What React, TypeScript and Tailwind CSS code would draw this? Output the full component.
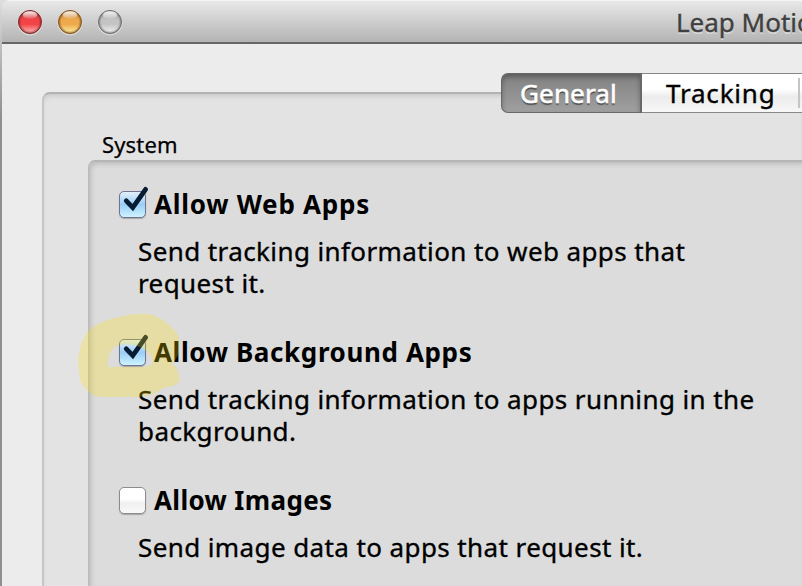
import React from "react";

type Light = { id: string; top: string; mid: string; low: string; rim: string };

const LIGHTS: Light[] = [
  { id: "close", top: "#b8484a", mid: "#f24447", low: "#ffc4c0", rim: "#842a2c" },
  { id: "minimise", top: "#bd8340", mid: "#eda94c", low: "#fff5a8", rim: "#865620" },
  { id: "zoom", top: "#a0a0a0", mid: "#c4c4c4", low: "#f6f6f6", rim: "#707070" },
];

function TrafficLight({ id, top, mid, low, rim }: Light) {
  return (
    <svg width="26" height="27" viewBox="0 0 26 27">
      <defs>
        <linearGradient id={`${id}-body`} x1="0" y1="0" x2="0" y2="1">
          <stop offset="0" stopColor={top} />
          <stop offset="0.4" stopColor={mid} />
          <stop offset="0.6" stopColor={mid} />
          <stop offset="1" stopColor={low} />
        </linearGradient>
        <radialGradient id={`${id}-edge`}>
          <stop offset="0.75" stopColor={rim} stopOpacity="0" />
          <stop offset="1" stopColor={rim} stopOpacity="0.75" />
        </radialGradient>
        <linearGradient id={`${id}-shine`} x1="0" y1="0" x2="0" y2="1">
          <stop offset="0" stopColor="#fff" stopOpacity="0.95" />
          <stop offset="1" stopColor="#fff" stopOpacity="0.1" />
        </linearGradient>
      </defs>
      <circle cx="13" cy="14" r="12" fill="none" stroke="#fff" strokeOpacity="0.5" />
      <circle cx="13" cy="13" r="11.5" fill={`url(#${id}-body)`} />
      <circle cx="13" cy="13" r="11.5" fill={`url(#${id}-edge)`} stroke={rim} />
      <ellipse cx="13" cy="6" rx="7.2" ry="3.8" fill={`url(#${id}-shine)`} />
    </svg>
  );
}

function Checkbox({ checked }: { checked: boolean }) {
  return (
    <span
      className={`relative block h-[27px] w-[27px] rounded-[5px] border shadow-[0_1px_1px_rgba(0,0,0,0.25)] ${
        checked
          ? "border-[#70748c] bg-linear-to-b from-[#e3f0fc] via-[#9bcdf7] to-[#cdf3ff]"
          : "border-[#8c8c8c] bg-linear-to-b from-white from-45% via-[#f0f0f0] via-60% to-[#f8f8f8]"
      }`}
    >
      {checked && (
        <svg className="absolute -top-[6px] -left-px" width="32" height="30" viewBox="0 0 32 30">
          <path
            d="M7.3 14.8L13.8 21.6L26.6 3.4"
            fill="none"
            stroke="#071c32"
            strokeWidth="4.8"
            strokeLinecap="round"
            strokeLinejoin="miter"
          />
        </svg>
      )}
    </span>
  );
}

function Setting({
  title,
  tracking,
  lines,
  checked,
  children,
}: {
  title: string;
  tracking: string;
  lines: string[];
  checked: boolean;
  children?: React.ReactNode;
}) {
  return (
    <section className="relative">
      <div className="flex h-8 items-center pl-px">
        <Checkbox checked={checked} />
        <h2 className={`ml-2 text-[26px] leading-8 font-bold ${tracking}`}>{title}</h2>
      </div>
      <p className="mt-[15px] ml-5 text-[26px] leading-8 tracking-[0.4px] [-webkit-text-stroke:0.35px_black]">
        {lines.map((text) => (
          <span key={text} className="block w-max">
            {text}
          </span>
        ))}
      </p>
      {children}
    </section>
  );
}

function Highlight() {
  return (
    <svg
      className="pointer-events-none absolute -top-[22px] -left-10"
      width="104"
      height="86"
      viewBox="0 0 104 86"
    >
      <path
        d="M10 17C20 8 33 4 47 2C55-1 64 0 72 0C80 3 88 7 94 14C100 18 103 26 101 34C101 40 99 45 94 50C99 53 102 59 101 67C98 73 90 72 84 75C78 80 67 83 58 83L22 83C13 82 6 75 2 66L0 48C1 35 4 25 10 17ZM30 53L67 53C71 52 75 51 75 47C73 41 69 37 64 34C58 30 48 30 40 31C33 34 29 42 30 53Z"
        fill="#ffdf00"
        fillOpacity="0.26"
        fillRule="evenodd"
      />
    </svg>
  );
}

export default function App() {
  return (
    <div className="flex h-[586px] w-[802px] overflow-hidden bg-linear-to-b from-[#dedede] to-[#909090] to-20% font-['Noto_Sans','Open_Sans',sans-serif] text-black">
      <main className="ml-0.5 flex w-[800px] shrink-0 flex-col overflow-hidden rounded-tl-[8px] bg-[#ececec]">
        <header className="flex h-11 shrink-0 items-start border-t border-b-2 border-t-[#f4f4f4] border-b-[#666] bg-linear-to-b from-[#e8e8e8] to-[#b4b4b4]">
          <div className="mt-2 ml-[15px] flex gap-[14px]">
            {LIGHTS.map((l) => (
              <TrafficLight key={l.id} {...l} />
            ))}
          </div>
          <h1 className="mt-[5px] ml-[553px] text-[26px] leading-8 whitespace-nowrap text-[#404040] [-webkit-text-stroke:0.35px_#404040] [text-shadow:0_2px_0_rgba(255,255,255,0.4)]">
            Leap Motion
          </h1>
        </header>

        <div className="mt-12 ml-10 flex grow flex-col rounded-tl-[8px] border-t-2 border-l-2 border-t-[#b2b2b2] border-l-[#c6c6c6] bg-[#e3e3e3] shadow-[inset_0_4px_5px_-2px_rgba(0,0,0,0.12)]">
          <nav className="-mt-[21px] ml-[457px] flex h-10 w-[303px] shrink-0 text-[26px] leading-9">
            <div className="w-[141px] rounded-l-[7px] border border-r-2 border-[#686868] bg-linear-to-b from-[#818181] to-[#a0a0a0] pt-px pl-[18px] tracking-[0.15px] text-white shadow-[inset_0_3px_5px_rgba(0,0,0,0.3)] [-webkit-text-stroke:0.6px_white] [text-shadow:0_2px_1px_rgba(0,0,0,0.45)]">
              General
            </div>
            <div className="flex w-[162px] items-start justify-between border-y border-y-[#888] bg-linear-to-b from-white from-40% via-[#ececec] via-60% to-[#f7f7f7] pt-px pr-1 pl-6 tracking-[0.8px] [-webkit-text-stroke:0.35px_black]">
              <span>Tracking</span>
              <span className="mt-[3px] h-[30px] w-0.5 bg-[#c5c5c5]" />
            </div>
          </nav>

          <h3 className="mt-4 ml-[58px] h-[31px] text-[22px] leading-[30px] tracking-[0.15px] [-webkit-text-stroke:0.25px_black]">
            System
          </h3>

          <div className="ml-11 grow rounded-tl-[7px] border-t-2 border-l-2 border-t-[#b5b5b5] border-l-[#bdbdbd] bg-[#dcdcdc] shadow-[inset_2px_3px_5px_-1px_rgba(0,0,0,0.15)]">
            <div className="mt-[26px] ml-7 flex flex-col gap-[37px]">
              <Setting
                title="Allow Web Apps"
                tracking="tracking-[0.75px]"
                checked
                lines={["Send tracking information to web apps that", "request it."]}
              />
              <Setting
                title="Allow Background Apps"
                tracking="tracking-[0.62px]"
                checked
                lines={["Send tracking information to apps running in the", "background."]}
              >
                <Highlight />
              </Setting>
              <Setting
                title="Allow Images"
                tracking="tracking-[0.35px]"
                checked={false}
                lines={["Send image data to apps that request it."]}
              />
            </div>
          </div>
        </div>
      </main>
    </div>
  );
}
